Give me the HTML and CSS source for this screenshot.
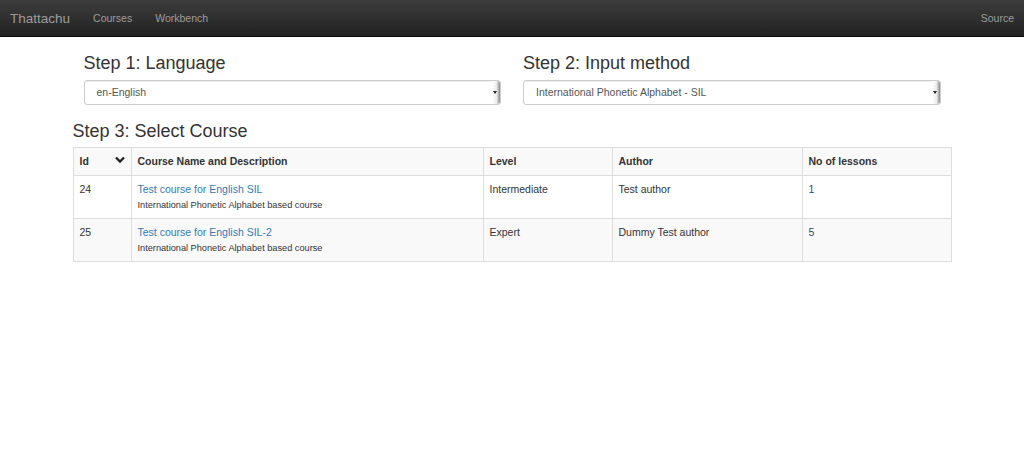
FILE: index.html
```html
<!DOCTYPE html>
<html>
<head>
<meta charset="utf-8">
<link rel="stylesheet" href="styles.css">
</head>
<body>
<nav class="navbar">
  <div class="nav-left">
    <span class="brand">Thattachu</span>
    <span class="nav-link">Courses</span>
    <span class="nav-link">Workbench</span>
  </div>
  <div class="nav-right">
    <span class="nav-link">Source</span>
  </div>
</nav>
<div class="container">
  <div class="row">
    <div class="col">
      <h3>Step 1: Language</h3>
      <div class="select"><span class="select-text">en-English</span><span class="select-arrow"></span></div>
    </div>
    <div class="col">
      <h3>Step 2: Input method</h3>
      <div class="select"><span class="select-text">International Phonetic Alphabet - SIL</span><span class="select-arrow"></span></div>
    </div>
  </div>
  <h3 class="step3">Step 3: Select Course</h3>
  <table class="courses">
    <tr class="head">
      <th class="c-id"><div class="id-head"><span>Id</span><svg class="chev" width="10" height="8" viewBox="0 0 10 8"><path d="M1 1.5 L5 5.5 L9 1.5" fill="none" stroke="#222" stroke-width="2.4"/></svg></div></th>
      <th class="c-name">Course Name and Description</th>
      <th class="c-level">Level</th>
      <th class="c-author">Author</th>
      <th class="c-lessons">No of lessons</th>
    </tr>
    <tr class="odd">
      <td>24</td>
      <td><span class="link">Test course for English SIL</span><div class="desc">International Phonetic Alphabet based course</div></td>
      <td>Intermediate</td>
      <td>Test author</td>
      <td><span class="count">1</span></td>
    </tr>
    <tr class="even">
      <td>25</td>
      <td><span class="link">Test course for English SIL-2</span><div class="desc">International Phonetic Alphabet based course</div></td>
      <td>Expert</td>
      <td>Dummy Test author</td>
      <td><span class="count">5</span></td>
    </tr>
  </table>
</div>
</body>
</html>
```
FILE: styles.css
```css
* { box-sizing: border-box; }
html, body { margin: 0; padding: 0; background: #fff; }
body {
  font-family: "Liberation Sans", Arial, sans-serif;
  font-size: 10.5px;
  line-height: 15px;
  color: #333;
}
.navbar {
  height: 37px;
  background: linear-gradient(to bottom, #3c3c3c 0%, #222 100%);
  border-bottom: 1px solid #080808;
  display: flex;
  justify-content: space-between;
  align-items: center;
  padding: 0 10px;
}
.nav-left { display: flex; align-items: center; }
.brand {
  font-size: 13.5px;
  color: #9d9d9d;
  margin-right: 23px;
}
.nav-link {
  color: #9d9d9d;
  font-size: 10.5px;
  margin-right: 23px;
}
.nav-right .nav-link { margin-right: 0; }
.container {
  width: 879px;
  margin: 0 auto;
}
.row { display: flex; }
.col {
  flex: 1;
  padding: 0 11px;
}
h3 {
  font-size: 18px;
  font-weight: 500;
  line-height: 20px;
  margin: 16px 0 7px;
  color: #333;
}
.select {
  position: relative;
  height: 25px;
  border: 1px solid #ccc;
  border-radius: 3px;
  box-shadow: inset 0 1px 1px rgba(0,0,0,.075);
  display: flex;
  align-items: center;
  padding-left: 12px;
  color: #555;
}
.select-arrow {
  position: absolute;
  right: 0;
  top: 0;
  bottom: 0;
  width: 8px;
  background: linear-gradient(to right, #fff 0%, #eee 55%, #888 100%);
  border-radius: 0 3px 3px 0;
}
.select-arrow::after {
  content: "";
  position: absolute;
  left: 1px;
  top: 10px;
  border-left: 2.5px solid transparent;
  border-right: 2.5px solid transparent;
  border-top: 3px solid #222;
}
.step3 { margin: 16px 0 6px; }
.courses {
  width: 879px;
  border-collapse: collapse;
  border: 1px solid #ddd;
}
.courses th, .courses td {
  border: 1px solid #ddd;
  padding: 6px 6px;
  text-align: left;
  vertical-align: top;
}
.courses th { font-weight: bold; height: 28px; vertical-align: middle; padding: 5px 6px; }
.courses tr.head, .courses tr.even { background: #f9f9f9; }
.courses td { height: 43px; padding-top: 6px; }
.c-id { width: 58px; }
.c-name { width: 352px; }
.c-level { width: 129px; }
.c-author { width: 190px; }
.id-head { display: flex; justify-content: space-between; align-items: center; padding-right: 0; }
.chev { margin-top: -3px; }
.link { color: #337ab7; }
.count { color: #34495e; }
.desc { font-size: 9.2px; line-height: 11px; margin-top: 3px; }
```
